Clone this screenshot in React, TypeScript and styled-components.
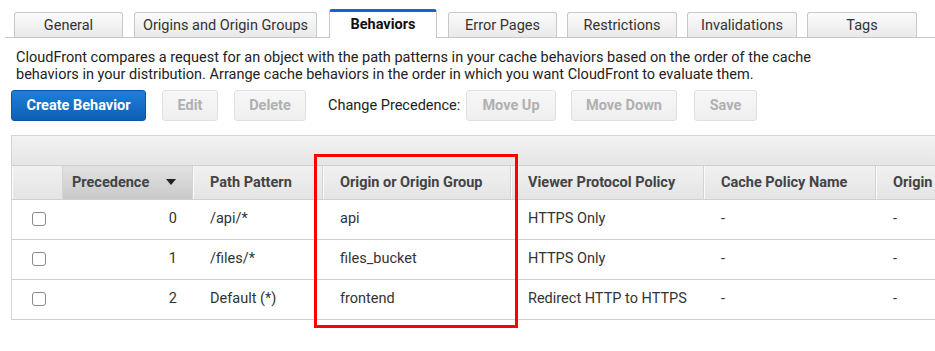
import React from "react";
import styled, { createGlobalStyle, css } from "styled-components";

const Global = createGlobalStyle`
  html, body { margin: 0; padding: 0; background: #fff; overflow: hidden; }
  body { font-family: Roboto, "Liberation Sans", Arial, sans-serif; font-size: 14.5px; color: #333; }
  * { box-sizing: border-box; }
`;

const Page = styled.div`
  width: 935px;
  height: 351px;
  position: relative;
  overflow: hidden;
`;

const TabStrip = styled.div`
  display: flex;
  align-items: flex-end;
  height: 38px;
  margin-left: 5px;
  padding-left: 9px;
  border-bottom: 1px solid #c8c8c8;
`;

const Tab = styled.div<{ $w: number; $gap: number; $active?: boolean }>`
  width: ${(p) => p.$w}px;
  height: 25px;
  margin-right: ${(p) => p.$gap}px;
  border: 1px solid #c8c8c8;
  border-bottom: none;
  border-radius: 3px 3px 0 0;
  background: linear-gradient(#fbfbfb, #e9e9e9);
  display: flex;
  align-items: center;
  justify-content: center;
  font-size: 14.5px;
  color: #333;
  ${(p) =>
    p.$active &&
    css`
      height: 29px;
      margin-bottom: -1px;
      background: #fff;
      border-top: 3px solid #1166cc;
      font-weight: 700;
      color: #111;
      padding-bottom: 2px;
    `}
`;

const Intro = styled.p`
  margin: 11px 0 0 16px;
  width: 850px;
  font-size: 14.5px;
  line-height: 17px;
  color: #222;
`;

const Toolbar = styled.div`
  display: flex;
  align-items: center;
  margin: 7px 0 0 11px;
  height: 31px;
`;

const Button = styled.button<{ $primary?: boolean; $w: number; $gap: number }>`
  width: ${(p) => p.$w}px;
  height: 31px;
  margin-right: ${(p) => p.$gap}px;
  border-radius: 3px;
  font-family: Roboto, "Liberation Sans", Arial, sans-serif;
  font-size: 14.5px;
  font-weight: 700;
  padding: 0;
  border: 1px solid #e0e0e0;
  background: linear-gradient(#f7f7f7, #efefef);
  color: #b0b0b0;
  ${(p) =>
    p.$primary &&
    css`
      border: 1px solid #0b56a8;
      background: linear-gradient(#1f7fd6, #0d5fb7);
      color: #fff;
    `}
`;

const Label = styled.span`
  width: 138px;
  font-size: 14.5px;
  color: #222;
  white-space: nowrap;
`;

const TableWrap = styled.div`
  margin: 14px 0 0 11px;
  width: 1000px;
  border-left: 1px solid #d5d5d5;
  border-top: 1px solid #d5d5d5;
`;

const TopBar = styled.div`
  height: 30px;
  background: linear-gradient(#f3f3f3, #e5e5e5);
  border-bottom: 1px solid #d0d0d0;
`;

const Grid = styled.div`
  display: grid;
  grid-template-columns: 51px 130px 130px 188px 193px 172px 1fr;
`;

const HeadCell = styled.div<{ $sorted?: boolean }>`
  height: 34px;
  display: flex;
  align-items: center;
  padding-left: 17px;
  padding-bottom: 1px;
  font-weight: 700;
  font-size: 14.5px;
  color: #444;
  background: linear-gradient(#f1f1f1, #e4e4e4);
  border-right: 1px solid #d4d4d4;
  box-shadow: inset 1px 0 0 #fafafa;
  border-bottom: 1px solid #d0d0d0;
  ${(p) =>
    p.$sorted &&
    css`
      padding-left: 9px;
      padding-right: 16px;
      justify-content: space-between;
      background: linear-gradient(#e2e2e2, #c9c9c9);
      box-shadow: none;
    `}
`;

const SortArrow = styled.svg`
  width: 10px;
  height: 6px;
`;

const Cell = styled.div<{ $right?: boolean; $center?: boolean }>`
  height: 40px;
  display: flex;
  align-items: center;
  padding-left: 17px;
  padding-bottom: 2px;
  font-size: 14.5px;
  color: #333;
  border-bottom: 1px solid #d0d0d0;
  ${(p) => p.$right && css`justify-content: flex-end; padding-right: 16px;`}
  ${(p) => p.$center && css`justify-content: center; padding-left: 2px;`}
`;

const Check = styled.span`
  width: 14px;
  height: 14px;
  border: 1px solid #8a8a8a;
  border-radius: 3px;
  background: #fff;
  display: inline-block;
`;

const Highlight = styled.div`
  position: absolute;
  left: 314px;
  top: 154px;
  width: 204px;
  height: 174px;
  border: 3px solid #ff0000;
  pointer-events: none;
`;

const tabs: [string, number, number][] = [
  ["General", 109, 11],
  ["Origins and Origin Groups", 183, 12],
  ["Behaviors", 108, 11],
  ["Error Pages", 109, 10],
  ["Restrictions", 110, 10],
  ["Invalidations", 110, 10],
  ["Tags", 110, 0],
];

const rows = [
  ["0", "/api/*", "api", "HTTPS Only"],
  ["1", "/files/*", "files_bucket", "HTTPS Only"],
  ["2", "Default (*)", "frontend", "Redirect HTTP to HTTPS"],
];

export default function App() {
  return (
    <Page>
      <Global />
      <TabStrip>
        {tabs.map(([t, w, g]) => (
          <Tab key={t} $w={w} $gap={g} $active={t === "Behaviors"}>
            {t}
          </Tab>
        ))}
      </TabStrip>
      <Intro>
        CloudFront compares a request for an object with the path patterns in your cache behaviors based on the order of the cache
        behaviors in your distribution. Arrange cache behaviors in the order in which you want CloudFront to evaluate them.
      </Intro>
      <Toolbar>
        <Button $primary $w={135} $gap={16}>Create Behavior</Button>
        <Button $w={56} $gap={16}>Edit</Button>
        <Button $w={72} $gap={22}>Delete</Button>
        <Label>Change Precedence:</Label>
        <Button $w={90} $gap={15}>Move Up</Button>
        <Button $w={106} $gap={17}>Move Down</Button>
        <Button $w={63} $gap={0}>Save</Button>
      </Toolbar>
      <TableWrap>
        <TopBar />
        <Grid>
          <HeadCell />
          <HeadCell $sorted>
            Precedence
            <SortArrow viewBox="0 0 10 6">
              <path d="M0 0 H10 L5 6 Z" fill="#222" />
            </SortArrow>
          </HeadCell>
          <HeadCell>Path Pattern</HeadCell>
          <HeadCell>Origin or Origin Group</HeadCell>
          <HeadCell>Viewer Protocol Policy</HeadCell>
          <HeadCell>Cache Policy Name</HeadCell>
          <HeadCell>Origin</HeadCell>
          {rows.map((r) => (
            <React.Fragment key={r[0]}>
              <Cell $center>
                <Check />
              </Cell>
              <Cell $right>{r[0]}</Cell>
              <Cell>{r[1]}</Cell>
              <Cell>{r[2]}</Cell>
              <Cell>{r[3]}</Cell>
              <Cell>-</Cell>
              <Cell>-</Cell>
            </React.Fragment>
          ))}
        </Grid>
      </TableWrap>
      <Highlight />
    </Page>
  );
}
